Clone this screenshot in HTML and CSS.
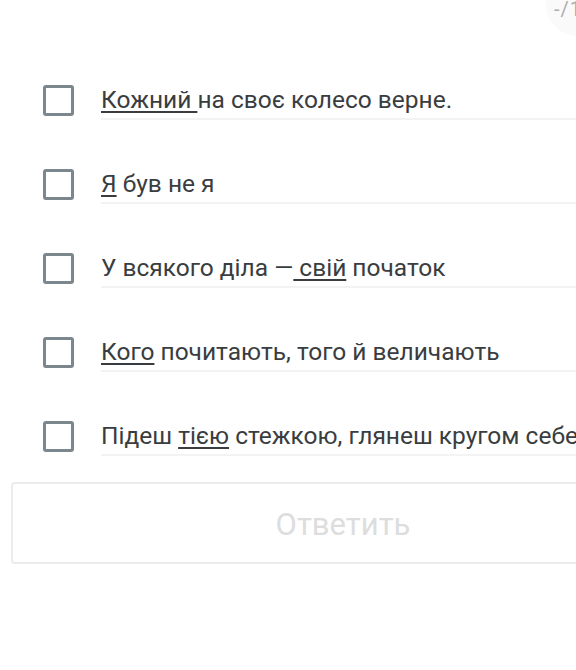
FILE: index.html
```html
<!DOCTYPE html>
<html lang="uk">
<head>
<meta charset="utf-8">
<link rel="stylesheet" href="styles.css">
</head>
<body>
<div class="page">
  <div class="badge">-/1</div>
  <ul class="options">
    <li class="row"><span class="box"></span><span class="label"><u>Кожний </u>на своє колесо верне.</span></li>
    <li class="row"><span class="box"></span><span class="label"><u>Я</u> був не я</span></li>
    <li class="row"><span class="box"></span><span class="label">У всякого діла —<u> свій</u> початок</span></li>
    <li class="row"><span class="box"></span><span class="label"><u>Кого</u> почитають, того й величають</span></li>
    <li class="row"><span class="box"></span><span class="label">Підеш <u>тією</u> стежкою, глянеш кругом себе</span></li>
  </ul>
  <button class="answer">Ответить</button>
</div>
</body>
</html>
```
FILE: styles.css
```css
html, body {
  margin: 0;
  padding: 0;
  background: #ffffff;
  overflow: hidden;
}
body {
  width: 576px;
  height: 670px;
  font-family: Roboto, "Noto Sans", sans-serif;
  color: #3a3d40;
}
.page {
  position: relative;
  width: 576px;
  height: 670px;
  overflow: hidden;
  padding-top: 58px;
  box-sizing: border-box;
}
.badge {
  position: absolute;
  top: -26px;
  left: 546px;
  width: 64px;
  height: 62px;
  border-radius: 50%;
  background: #fafafa;
  color: #adadad;
  font-size: 20px;
  letter-spacing: 1px;
  line-height: 20px;
  padding: 25px 0 0 8px;
  box-sizing: border-box;
}
.options {
  list-style: none;
  margin: 0;
  padding: 0;
}
.row {
  display: flex;
  align-items: center;
  height: 84px;
  padding-left: 43px;
}
.box {
  flex: none;
  width: 31px;
  height: 31px;
  box-sizing: border-box;
  border: 3px solid #7b878d;
  border-radius: 3px;
  margin-right: 27px;
}
.label {
  flex: 1;
  white-space: nowrap;
  font-size: 24.5px;
  line-height: 28px;
  padding-top: 6px;
  padding-bottom: 4px;
  border-bottom: 2px solid #f3f3f3;
  margin-right: -200px;
}
.label u {
  text-decoration: underline;
  text-decoration-thickness: 2px;
  text-underline-offset: 3px;
}
.answer {
  display: block;
  margin: 4px 0 0 11px;
  width: 664px;
  height: 82px;
  background: #ffffff;
  border: 2px solid #ececec;
  border-radius: 4px;
  font-family: Roboto, "Noto Sans", sans-serif;
  font-size: 31px;
  color: #dddddd;
  padding: 2px 0 0 0;
}
```
